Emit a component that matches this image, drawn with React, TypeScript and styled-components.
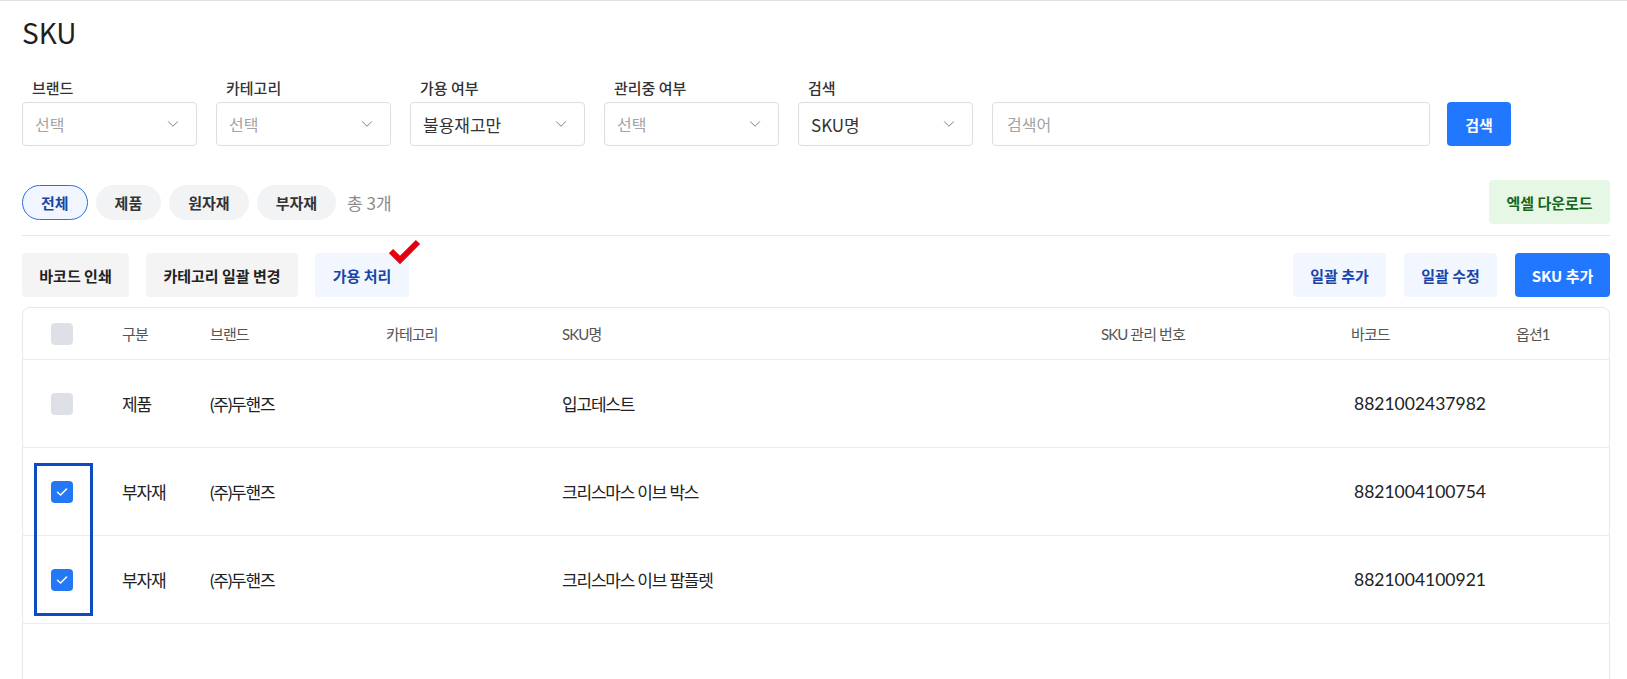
import React from "react";
import styled, { createGlobalStyle } from "styled-components";
import { ChevronDown } from "lucide-react";

const GlobalStyle = createGlobalStyle`
  html, body { margin: 0; padding: 0; background: #fff; }
  body { font-family: "Noto Sans CJK KR", "Noto Sans", sans-serif; color: #222; overflow: hidden; }
  * { box-sizing: border-box; }
`;

const Page = styled.div`
  border-top: 1px solid #e3e3e3;
  padding: 0 17px 0 22px;
  height: 679px;
  overflow: hidden;
`;

const Title = styled.h1`
  margin: 11px 0 0;
  font-size: 28px;
  line-height: 40px;
  font-weight: 400;
  color: #1f1f1f;
`;

const Filters = styled.div`
  display: flex;
  align-items: flex-end;
  gap: 19px;
  margin-top: 26px;
`;

const Field = styled.div`
  display: flex;
  flex-direction: column;
  gap: 4px;
`;

const Label = styled.div`
  height: 20px;
  line-height: 20px;
  padding-left: 10px;
  font-size: 15px;
  font-weight: 500;
  color: #333;
`;

const SelectBox = styled.div`
  width: 175px;
  height: 44px;
  border: 1px solid #dedede;
  border-radius: 4px;
  display: flex;
  align-items: center;
  justify-content: space-between;
  padding: 0 14px 0 12px;
  background: #fff;
`;

const SelectValue = styled.span<{ $placeholder?: boolean }>`
  font-size: ${(p) => (p.$placeholder ? "16px" : "17px")};
  color: ${(p) => (p.$placeholder ? "#a3a3a3" : "#333")};
`;

const SearchInput = styled.div`
  width: 438px;
  height: 44px;
  border: 1px solid #dedede;
  border-radius: 4px;
  display: flex;
  align-items: center;
  padding: 0 14px;
  font-size: 16px;
  color: #a3a3a3;
`;

const PrimaryButton = styled.button<{ $w?: number }>`
  height: 44px;
  width: ${(p) => (p.$w ? `${p.$w}px` : "auto")};
  padding: 0 16px;
  margin-left: -2px;
  border: none;
  border-radius: 4px;
  background: #2178ff;
  color: #fff;
  font-family: inherit;
  font-size: 15px;
  font-weight: 700;
`;

const TabRow = styled.div`
  display: flex;
  align-items: center;
  justify-content: space-between;
  height: 44px;
  margin-top: 34px;
`;

const Chips = styled.div`
  display: flex;
  align-items: center;
  gap: 8px;
`;

const Chip = styled.button<{ $active?: boolean }>`
  height: 35px;
  padding: 0 18px;
  border-radius: 18px;
  border: 1px solid ${(p) => (p.$active ? "#2f6fd8" : "#f2f3f5")};
  background: ${(p) => (p.$active ? "#f0f5ff" : "#f2f3f5")};
  color: ${(p) => (p.$active ? "#1a45a0" : "#333")};
  font-family: inherit;
  font-size: 15px;
  font-weight: 700;
`;

const Total = styled.span`
  margin-left: 3px;
  font-size: 17px;
  color: #8a8a8a;
`;

const ExcelButton = styled.button`
  height: 44px;
  width: 121px;
  border: none;
  border-radius: 4px;
  background: #e6f7e6;
  color: #17651a;
  font-family: inherit;
  font-size: 15px;
  font-weight: 700;
`;

const Divider = styled.div`
  height: 1px;
  background: #e6e6e6;
  margin-top: 11px;
`;

const ActionRow = styled.div`
  display: flex;
  justify-content: space-between;
  margin-top: 17px;
`;

const ButtonGroup = styled.div<{ $gap: number }>`
  display: flex;
  gap: ${(p) => p.$gap}px;
`;

const ActionButton = styled.button<{ $variant?: "gray" | "blue" | "primary"; $w: number }>`
  position: relative;
  height: 44px;
  width: ${(p) => p.$w}px;
  border: none;
  border-radius: 4px;
  font-family: inherit;
  font-size: 15px;
  font-weight: 700;
  background: ${(p) =>
    p.$variant === "blue" ? "#f2f6ff" : p.$variant === "primary" ? "#2178ff" : "#f4f4f5"};
  color: ${(p) =>
    p.$variant === "blue" ? "#1a45a8" : p.$variant === "primary" ? "#fff" : "#222"};
`;

const RedCheck = styled.svg`
  position: absolute;
  left: 74px;
  top: -15px;
  width: 32px;
  height: 26px;
`;

const Table = styled.div`
  position: relative;
  margin-top: 10px;
  border: 1px solid #e8e8e8;
  border-radius: 8px 8px 0 0;
  height: 420px;
`;

const cols = "99px 88px 176px 176px 539px 250px 165px 1fr";

const HeaderRow = styled.div`
  display: grid;
  grid-template-columns: ${cols};
  align-items: center;
  height: 52px;
  border-bottom: 1px solid #ececec;
  font-family: Lato, "Noto Sans CJK KR", sans-serif;
  font-size: 15px;
  color: #555;
`;

const Row = styled.div`
  display: grid;
  grid-template-columns: ${cols};
  align-items: center;
  height: 88px;
  border-bottom: 1px solid #ececec;
  font-family: Lato, "Noto Sans CJK KR", sans-serif;
  font-size: 17px;
  color: #222;
`;

const Cell = styled.div<{ $numeric?: boolean; $head?: boolean }>`
  white-space: nowrap;
  font-size: ${(p) => (p.$numeric ? "17.5px" : "inherit")};
  letter-spacing: ${(p) => (p.$numeric ? "0" : p.$head ? "-0.9px" : "-1.2px")};
  padding-left: ${(p) => (p.$numeric ? "3px" : "0")};
`;

const CheckCell = styled.div`
  padding-left: 28px;
  display: flex;
  align-items: center;
`;

const Box = styled.div<{ $checked?: boolean }>`
  width: 22px;
  height: 22px;
  border-radius: 4px;
  background: ${(p) => (p.$checked ? "#2478f6" : "#dde1e7")};
  display: flex;
  align-items: center;
  justify-content: center;
`;

const Highlight = styled.div`
  position: absolute;
  left: 11px;
  top: 155px;
  width: 59px;
  height: 153px;
  border: 3px solid #0b4cc6;
`;

const Check = () => (
  <svg width="12" height="10" viewBox="0 0 12 10">
    <path d="M1.5 5.2 L4.6 8 L10.5 2" fill="none" stroke="#fff" strokeWidth="1.5" strokeLinecap="round" strokeLinejoin="round" />
  </svg>
);

const selects = [
  { label: "브랜드", value: "선택", ph: true },
  { label: "카테고리", value: "선택", ph: true },
  { label: "가용 여부", value: "불용재고만", ph: false },
  { label: "관리중 여부", value: "선택", ph: true },
  { label: "검색", value: "SKU명", ph: false },
];

const rows = [
  { checked: false, type: "제품", brand: "(주)두핸즈", name: "입고테스트", barcode: "8821002437982" },
  { checked: true, type: "부자재", brand: "(주)두핸즈", name: "크리스마스 이브 박스", barcode: "8821004100754" },
  { checked: true, type: "부자재", brand: "(주)두핸즈", name: "크리스마스 이브 팜플렛", barcode: "8821004100921" },
];

const headers = ["구분", "브랜드", "카테고리", "SKU명", "SKU 관리 번호", "바코드", "옵션1"];

export default function App() {
  return (
    <>
      <GlobalStyle />
      <Page>
        <Title>SKU</Title>
        <Filters>
          {selects.map((s) => (
            <Field key={s.label}>
              <Label>{s.label}</Label>
              <SelectBox>
                <SelectValue $placeholder={s.ph}>{s.value}</SelectValue>
                <ChevronDown size={18} strokeWidth={1.3} color="#7a7a7a" />
              </SelectBox>
            </Field>
          ))}
          <SearchInput>검색어</SearchInput>
          <PrimaryButton $w={64}>검색</PrimaryButton>
        </Filters>

        <TabRow>
          <Chips>
            <Chip $active>전체</Chip>
            <Chip>제품</Chip>
            <Chip>원자재</Chip>
            <Chip>부자재</Chip>
            <Total>총 3개</Total>
          </Chips>
          <ExcelButton>엑셀 다운로드</ExcelButton>
        </TabRow>
        <Divider />

        <ActionRow>
          <ButtonGroup $gap={17}>
            <ActionButton $w={107}>바코드 인쇄</ActionButton>
            <ActionButton $w={152}>카테고리 일괄 변경</ActionButton>
            <ActionButton $w={94} $variant="blue">
              가용 처리
              <RedCheck viewBox="0 0 32 26">
                <path d="M2 13 L11 22 L29 4" fill="none" stroke="#e3000f" strokeWidth="6" strokeLinejoin="miter" />
              </RedCheck>
            </ActionButton>
          </ButtonGroup>
          <ButtonGroup $gap={18}>
            <ActionButton $w={93} $variant="blue">일괄 추가</ActionButton>
            <ActionButton $w={93} $variant="blue">일괄 수정</ActionButton>
            <ActionButton $w={95} $variant="primary">SKU 추가</ActionButton>
          </ButtonGroup>
        </ActionRow>

        <Table>
          <HeaderRow>
            <CheckCell><Box /></CheckCell>
            {headers.map((h) => (
              <Cell key={h} $head>{h}</Cell>
            ))}
          </HeaderRow>
          {rows.map((r, i) => (
            <Row key={i}>
              <CheckCell>
                <Box $checked={r.checked}>{r.checked && <Check />}</Box>
              </CheckCell>
              <Cell>{r.type}</Cell>
              <Cell>{r.brand}</Cell>
              <Cell />
              <Cell>{r.name}</Cell>
              <Cell />
              <Cell $numeric>{r.barcode}</Cell>
              <Cell />
            </Row>
          ))}
          <Highlight />
        </Table>
      </Page>
    </>
  );
}
